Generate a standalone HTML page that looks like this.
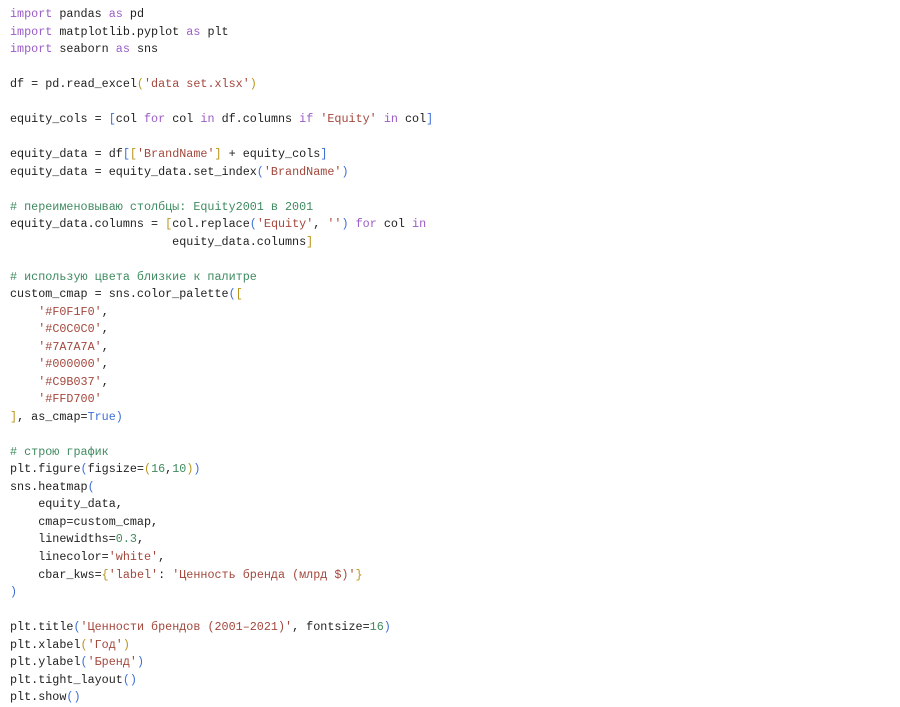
<!DOCTYPE html>
<html><head><meta charset="utf-8"><style>
body{margin:0;background:#fff;width:900px;height:707px;overflow:hidden}
pre{margin:0;padding:6px 0 0 10px;font-family:"Liberation Mono","DejaVu Sans Mono",monospace;font-size:11.75px;line-height:17.51px;color:#1f1f1f}
.k{color:#9b5cc6}.s{color:#a3473c}.c{color:#3f8a60}.n{color:#3f8a5c}.b{color:#3c6fd6}.g{color:#b8961e}.t{color:#3c6fd6}
</style></head><body><pre><span class="k">import</span> pandas <span class="k">as</span> pd
<span class="k">import</span> matplotlib.pyplot <span class="k">as</span> plt
<span class="k">import</span> seaborn <span class="k">as</span> sns

df = pd.read_excel<span class="g">(</span><span class="s">'data set.xlsx'</span><span class="g">)</span>

equity_cols = <span class="b">[</span>col <span class="k">for</span> col <span class="k">in</span> df.columns <span class="k">if</span> <span class="s">'Equity'</span> <span class="k">in</span> col<span class="b">]</span>

equity_data = df<span class="b">[</span><span class="g">[</span><span class="s">'BrandName'</span><span class="g">]</span> + equity_cols<span class="b">]</span>
equity_data = equity_data.set_index<span class="b">(</span><span class="s">'BrandName'</span><span class="b">)</span>

<span class="c"># переименовываю столбцы: Equity2001 в 2001</span>
equity_data.columns = <span class="g">[</span>col.replace<span class="b">(</span><span class="s">'Equity'</span>, <span class="s">''</span><span class="b">)</span> <span class="k">for</span> col <span class="k">in</span>
                       equity_data.columns<span class="g">]</span>

<span class="c"># использую цвета близкие к палитре</span>
custom_cmap = sns.color_palette<span class="b">(</span><span class="g">[</span>
    <span class="s">'#F0F1F0'</span>,
    <span class="s">'#C0C0C0'</span>,
    <span class="s">'#7A7A7A'</span>,
    <span class="s">'#000000'</span>,
    <span class="s">'#C9B037'</span>,
    <span class="s">'#FFD700'</span>
<span class="g">]</span>, as_cmap=<span class="t">True</span><span class="b">)</span>

<span class="c"># строю график</span>
plt.figure<span class="b">(</span>figsize=<span class="g">(</span><span class="n">16</span>,<span class="n">10</span><span class="g">)</span><span class="b">)</span>
sns.heatmap<span class="b">(</span>
    equity_data,
    cmap=custom_cmap,
    linewidths=<span class="n">0.3</span>,
    linecolor=<span class="s">'white'</span>,
    cbar_kws=<span class="g">{</span><span class="s">'label'</span>: <span class="s">'Ценность бренда (млрд $)'</span><span class="g">}</span>
<span class="b">)</span>

plt.title<span class="b">(</span><span class="s">'Ценности брендов (2001–2021)'</span>, fontsize=<span class="n">16</span><span class="b">)</span>
plt.xlabel<span class="g">(</span><span class="s">'Год'</span><span class="g">)</span>
plt.ylabel<span class="b">(</span><span class="s">'Бренд'</span><span class="b">)</span>
plt.tight_layout<span class="b">()</span>
plt.show<span class="b">()</span></pre></body></html>
